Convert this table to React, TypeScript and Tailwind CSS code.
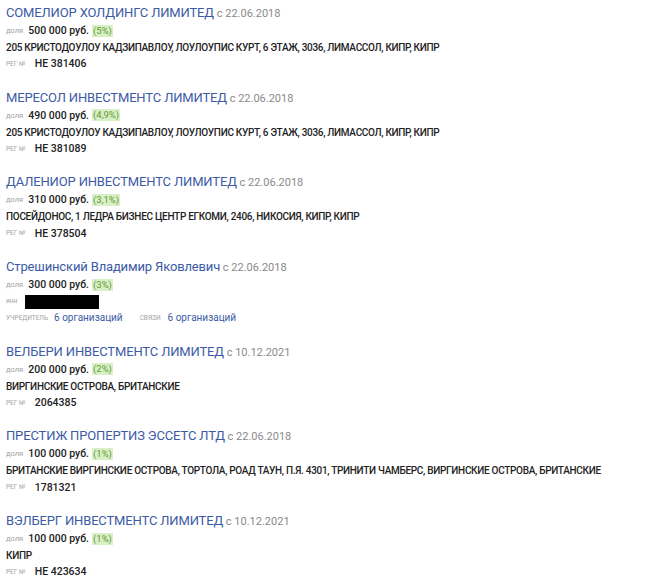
import React from "react";

type Entry = {
  name: string;
  date: string;
  amount: string;
  pct: string;
  address?: string;
  reg?: string;
  person?: boolean;
};

const entries: Entry[] = [
  { name: "СОМЕЛИОР ХОЛДИНГС ЛИМИТЕД", date: "22.06.2018", amount: "500 000 руб.", pct: "(5%)", address: "205 КРИСТОДОУЛОУ КАДЗИПАВЛОУ, ЛОУЛОУПИС КУРТ, 6 ЭТАЖ, 3036, ЛИМАССОЛ, КИПР, КИПР", reg: "HE 381406" },
  { name: "МЕРЕСОЛ ИНВЕСТМЕНТС ЛИМИТЕД", date: "22.06.2018", amount: "490 000 руб.", pct: "(4,9%)", address: "205 КРИСТОДОУЛОУ КАДЗИПАВЛОУ, ЛОУЛОУПИС КУРТ, 6 ЭТАЖ, 3036, ЛИМАССОЛ, КИПР, КИПР", reg: "HE 381089" },
  { name: "ДАЛЕНИОР ИНВЕСТМЕНТС ЛИМИТЕД", date: "22.06.2018", amount: "310 000 руб.", pct: "(3,1%)", address: "ПОСЕЙДОНОС, 1 ЛЕДРА БИЗНЕС ЦЕНТР ЕГКОМИ, 2406, НИКОСИЯ, КИПР, КИПР", reg: "HE 378504" },
  { name: "Стрешинский Владимир Яковлевич", date: "22.06.2018", amount: "300 000 руб.", pct: "(3%)", person: true },
  { name: "ВЕЛБЕРИ ИНВЕСТМЕНТС ЛИМИТЕД", date: "10.12.2021", amount: "200 000 руб.", pct: "(2%)", address: "ВИРГИНСКИЕ ОСТРОВА, БРИТАНСКИЕ", reg: "2064385" },
  { name: "ПРЕСТИЖ ПРОПЕРТИЗ ЭССЕТС ЛТД", date: "22.06.2018", amount: "100 000 руб.", pct: "(1%)", address: "БРИТАНСКИЕ ВИРГИНСКИЕ ОСТРОВА, ТОРТОЛА, РОАД ТАУН, П.Я. 4301, ТРИНИТИ ЧАМБЕРС, ВИРГИНСКИЕ ОСТРОВА, БРИТАНСКИЕ", reg: "1781321" },
  { name: "ВЭЛБЕРГ ИНВЕСТМЕНТС ЛИМИТЕД", date: "10.12.2021", amount: "100 000 руб.", pct: "(1%)", address: "КИПР", reg: "HE 423634" },
];

const font = { fontFamily: "Roboto, 'Noto Sans', sans-serif" };

function Label({ children }: { children: React.ReactNode }) {
  return <span className="text-[6.5px] leading-[8px] uppercase text-[#a3a3a3]">{children}</span>;
}

export default function App() {
  return (
    <div className="w-[646px] h-[578px] bg-white overflow-hidden pl-[6px] pt-[2px]" style={font}>
      {entries.map((e, i) => (
        <div key={i} className="mb-[14.7px]">
          <div className="h-[19px] leading-[19px] whitespace-nowrap">
            <span className="text-[13px] tracking-[-0.15px] text-[#3c5aa6]">{e.name}</span>
            <span className="text-[11px] text-[#8a8a8a]"> с {e.date}</span>
          </div>
          <div className="h-[17px] leading-[17px] flex items-center whitespace-nowrap mt-[1px]">
            <span className="text-[7.5px] lowercase text-[#a3a3a3] mr-[5px]">доля</span>
            <span className="text-[10.5px] font-medium text-[#222]">{e.amount}</span>
            <span className="ml-[3px] text-[9.5px] leading-[12px] px-[1px] bg-[#d9efc6] text-[#5f9b34]">{e.pct}</span>
          </div>
          {e.person ? (
            <>
              <div className="h-[17px] flex items-center">
                <span className="text-[6.5px] lowercase text-[#a3a3a3] w-[19px]">инн</span>
                <span className="w-[74px] h-[14px] bg-black" />
              </div>
              <div className="h-[16px] leading-[16px] flex items-center whitespace-nowrap">
                <Label>учредитель</Label>
                <span className="ml-[6px] text-[10px] text-[#3c5aa6]">6 организаций</span>
                <span className="ml-[17px] flex items-center"><Label>связи</Label></span>
                <span className="ml-[7px] text-[10px] text-[#3c5aa6]">6 организаций</span>
              </div>
            </>
          ) : (
            <>
              <div className="h-[17px] leading-[17px] text-[10px] tracking-[-0.3px] font-medium text-[#222] whitespace-nowrap">{e.address}</div>
              <div className="h-[16px] flex items-center whitespace-nowrap">
                <Label>рег №</Label>
                <span className="ml-[9px] text-[10.5px] font-medium text-[#222]">{e.reg}</span>
              </div>
            </>
          )}
        </div>
      ))}
    </div>
  );
}
